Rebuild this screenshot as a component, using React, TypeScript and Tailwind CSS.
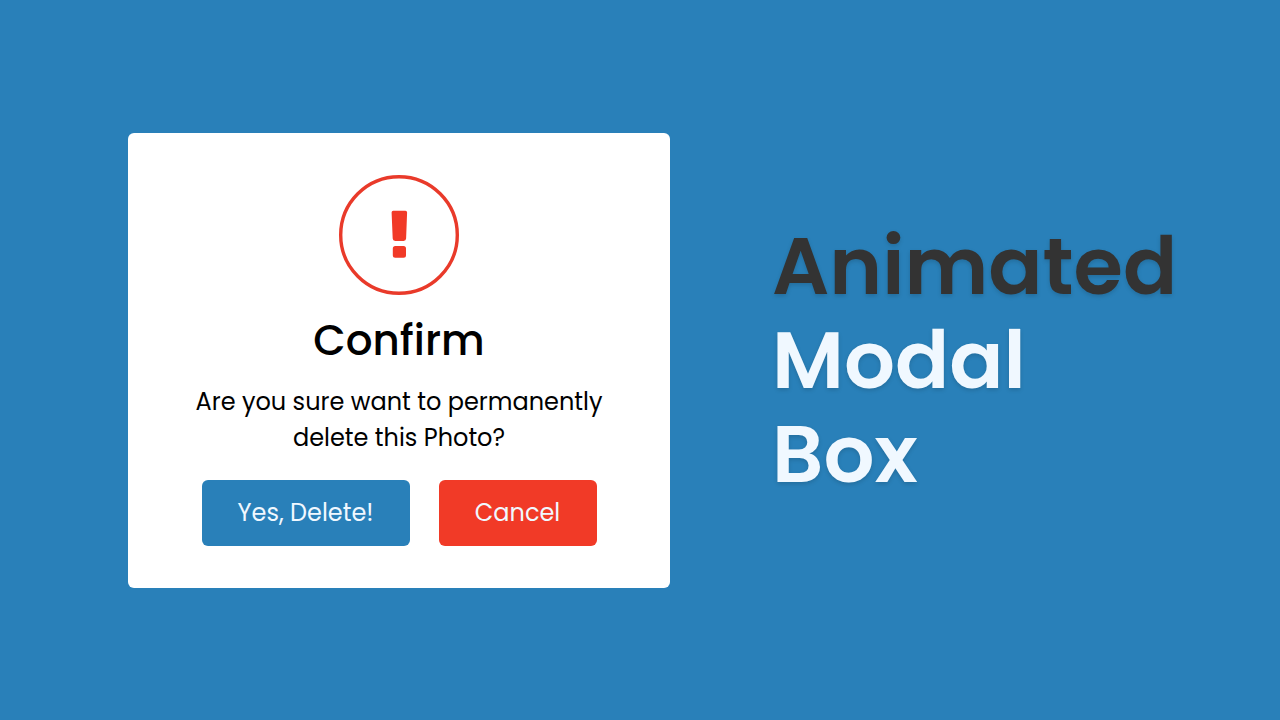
export default function App() {
  return (
    <main className="flex min-h-screen items-center bg-[#2980b9] px-32 font-['Poppins','Open_Sans',sans-serif]">
      <section role="dialog" aria-labelledby="confirm-title" className="flex w-[542px] shrink-0 flex-col items-center rounded-md bg-white px-12 py-[42px] text-center text-black">
        <svg viewBox="0 0 120 120" className="size-[120px]" aria-hidden="true">
          <circle cx="60" cy="60" r="58.3" fill="none" stroke="#e93a2a" strokeWidth="3.4" />
          <path fill="#f13a27" d="M54.2 35.8h12.2q1.8 0 1.7 1.8l-1 26q-.1 2.4-2.5 2.4h-8.4q-2.4 0-2.5-2.4l-1.1-26q0-1.8 1.6-1.8z M56.3 71h8.2q2.5 0 2.5 2.5v6.8q0 2.5-2.5 2.5h-8.2q-2.5 0-2.5-2.5v-6.8q0-2.5 2.5-2.5z" />
        </svg>
        <h2 id="confirm-title" className="mt-3.5 text-[42px] leading-[64px] font-medium">Confirm</h2>
        <p className="mt-[11px] w-[420px] text-2xl leading-9">Are you sure want to permanently delete this Photo?</p>
        <div className="mt-6 flex gap-[29px]">
          <button type="button" className="h-[66px] w-[208px] rounded-md bg-[#2980b9] text-2xl text-[#f0f8ff]">Yes, Delete!</button>
          <button type="button" className="h-[66px] w-[158px] rounded-md bg-[#f13a27] text-2xl text-[#f0f8ff]">Cancel</button>
        </div>
      </section>
      <h1 className="ml-[102px] text-[80px] leading-[94px] font-semibold text-[#f0f8ff] text-shadow-[0_2px_4px_rgb(0_0_0/0.15)]">
        <span className="block text-[#333333]">Animated</span>
        <span className="block">Modal</span>
        <span className="block">Box</span>
      </h1>
    </main>
  );
}
